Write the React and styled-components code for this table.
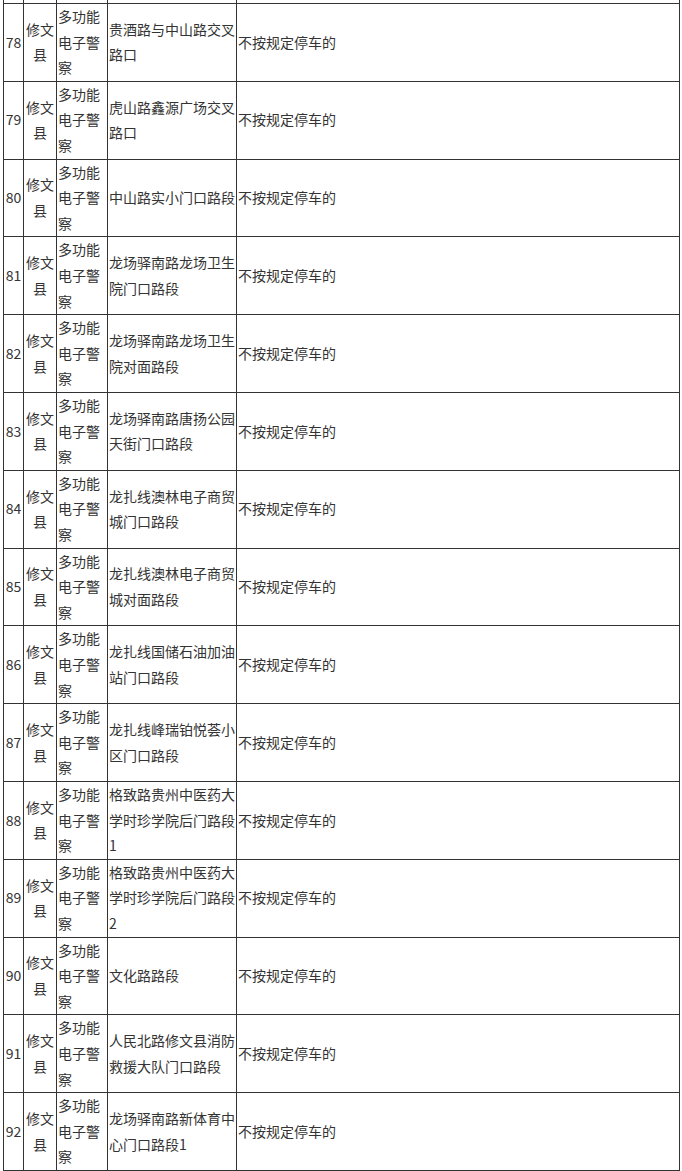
import styled, { createGlobalStyle } from "styled-components";

// global
const GlobalStyle = createGlobalStyle`
  html, body {
    margin: 0;
    padding: 0;
    background: #fff;
  }
  body {
    font-family: "Noto Sans CJK SC", "Microsoft YaHei", sans-serif;
    font-size: 14px;
    color: #333;
  }
`;

const COLS = "20px 33px 51px 129px 443px";

// style
const Page = styled.div`
  padding-left: 3px;
  height: 1171px;
  overflow: hidden;
`;

const Table = styled.div`
  display: grid;
  width: 677px;
  border-left: 1px solid #333;
`;

const Row = styled.div`
  display: grid;
  grid-template-columns: ${COLS};
`;

const Cell = styled.div`
  box-sizing: border-box;
  border-right: 1px solid #333;
  border-bottom: 1px solid #333;
  padding: 0 1px;
  display: flex;
  align-items: center;
  justify-content: ${(p) => (p.$center ? "center" : "flex-start")};
  text-align: ${(p) => (p.$center ? "center" : "left")};
  min-height: ${(p) => (p.$stub ? "4px" : "77.8px")};
  line-height: 25.6px;
  word-break: break-all;
`;

const CellText = styled.span`
  display: block;
  width: 100%;
`;

const rows = [
  [78, "贵酒路与中山路交叉路口"],
  [79, "虎山路鑫源广场交叉路口"],
  [80, "中山路实小门口路段"],
  [81, "龙场驿南路龙场卫生院门口路段"],
  [82, "龙场驿南路龙场卫生院对面路段"],
  [83, "龙场驿南路唐扬公园天街门口路段"],
  [84, "龙扎线澳林电子商贸城门口路段"],
  [85, "龙扎线澳林电子商贸城对面路段"],
  [86, "龙扎线国储石油加油站门口路段"],
  [87, "龙扎线峰瑞铂悦荟小区门口路段"],
  [88, "格致路贵州中医药大学时珍学院后门路段1"],
  [89, "格致路贵州中医药大学时珍学院后门路段2"],
  [90, "文化路路段"],
  [91, "人民北路修文县消防救援大队门口路段"],
  [92, "龙场驿南路新体育中心门口路段1"],
];

const App = () => {
  return (
    <>
      <GlobalStyle />
      <Page>
        <Table>
          {/* tail of the previous row, cut off by the page top */}
          <Row>
            {[0, 1, 2, 3, 4].map((i) => (
              <Cell key={i} $stub />
            ))}
          </Row>

          {rows.map(([no, place]) => (
            <Row key={no}>
              <Cell $center>{no}</Cell>
              <Cell $center>
                <CellText>修文县</CellText>
              </Cell>
              <Cell>
                <CellText>多功能电子警察</CellText>
              </Cell>
              <Cell>
                <CellText>{place}</CellText>
              </Cell>
              <Cell>
                <CellText>不按规定停车的</CellText>
              </Cell>
            </Row>
          ))}
        </Table>
      </Page>
    </>
  );
};

export default App;
